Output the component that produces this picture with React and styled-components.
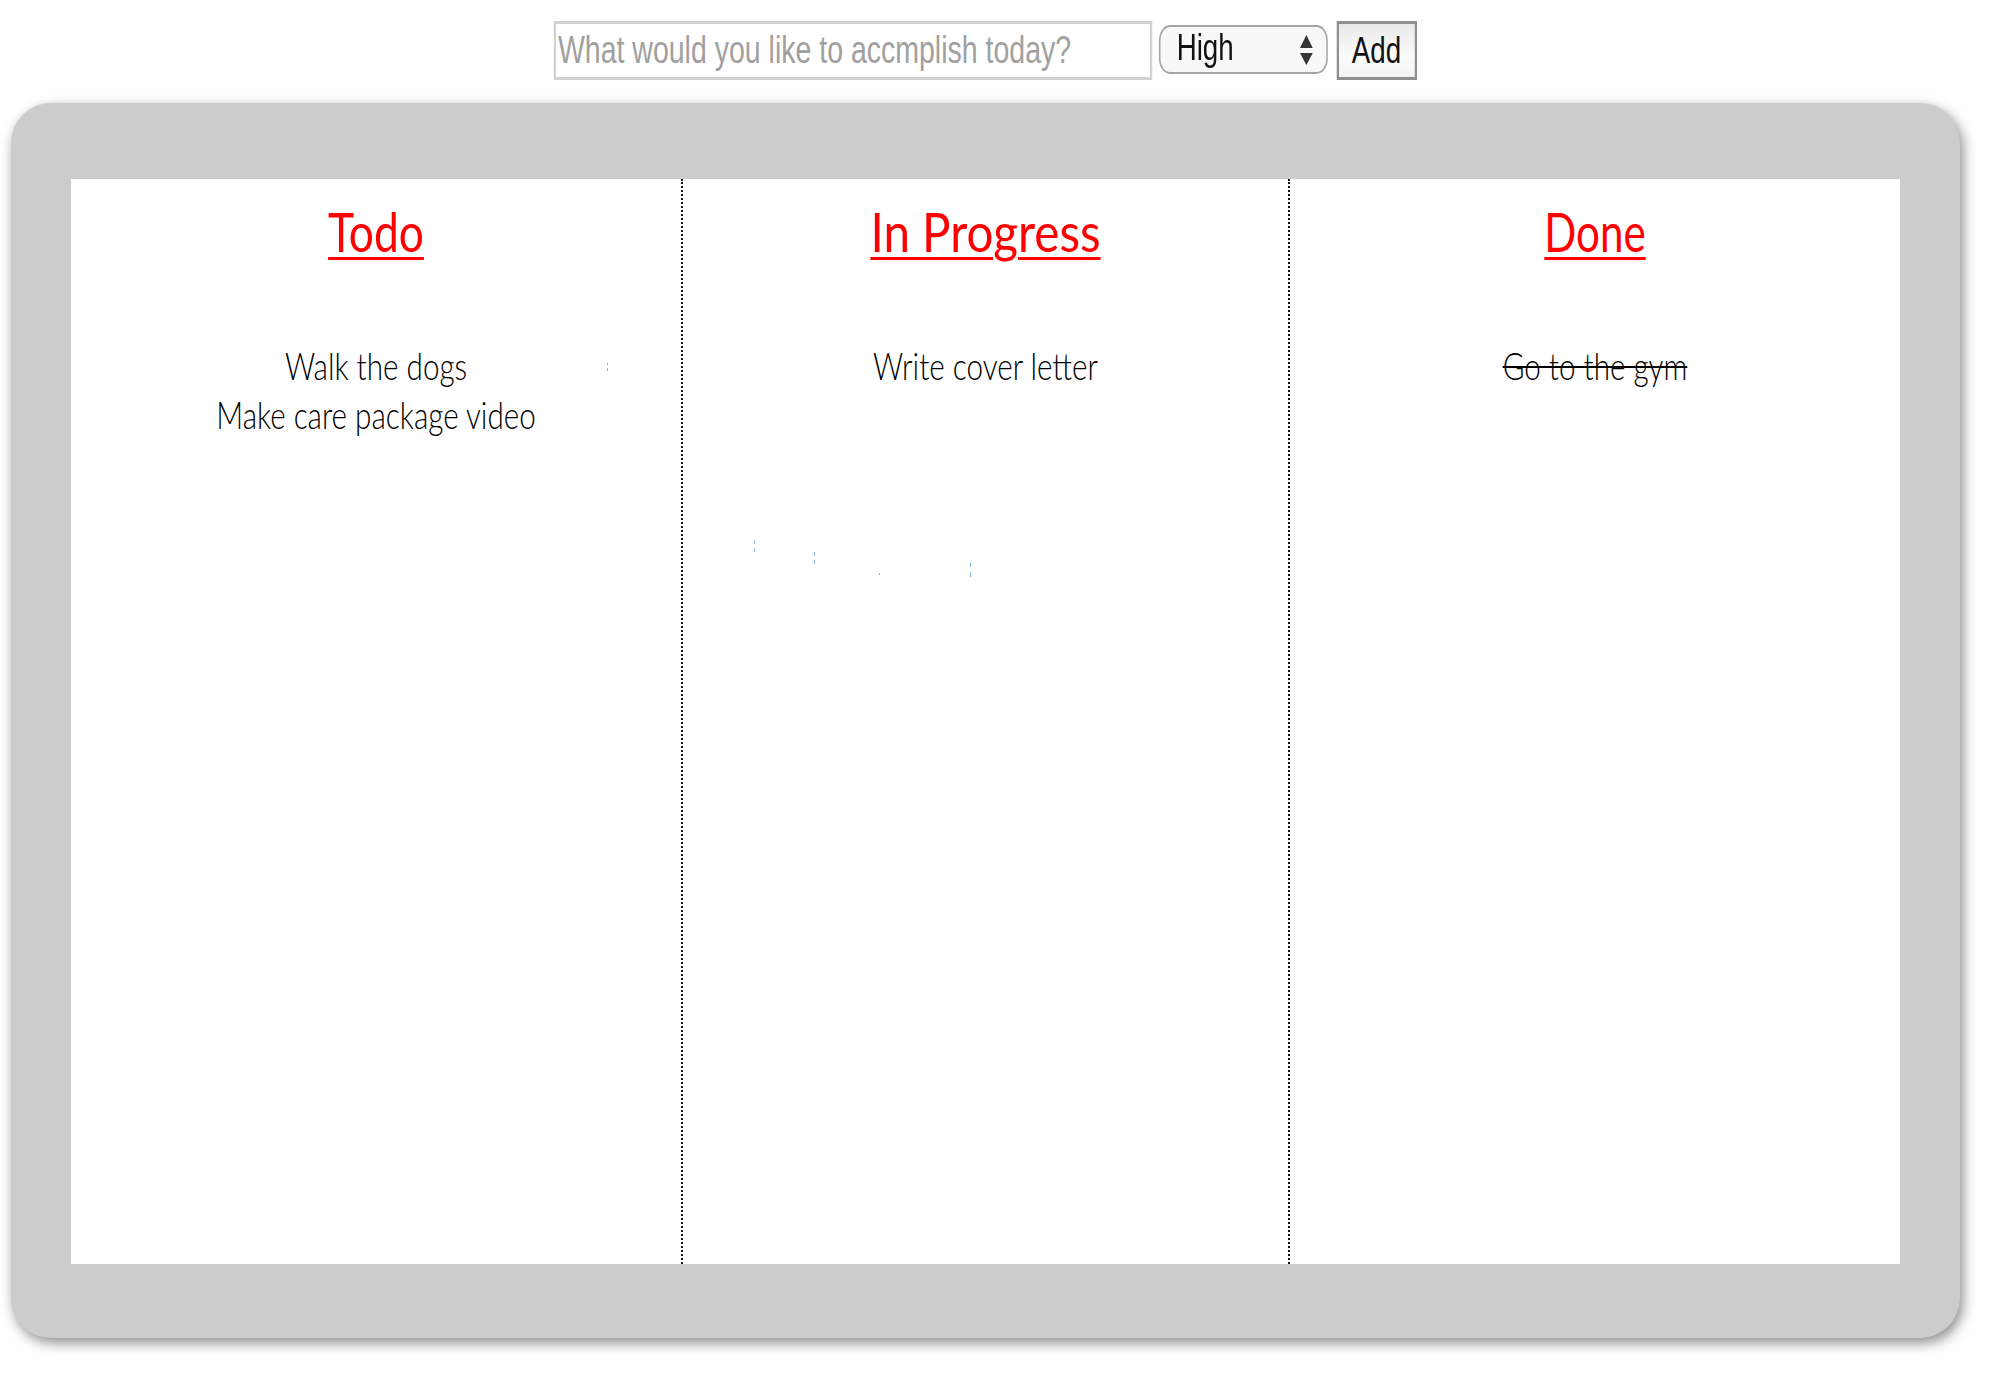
import React from 'react';
import styled, { createGlobalStyle } from 'styled-components';

const GlobalStyle = createGlobalStyle`
  html, body {
    margin: 0;
    padding: 0;
    background: #fff;
  }
`;

const controlFont = `"Liberation Sans", Arial, sans-serif`;
const handFont = `"Lato", "Open Sans", sans-serif`;

const Page = styled.div`
  width: 1989px;
  height: 1388px;
  padding-top: 21px;
  box-sizing: border-box;
  overflow: hidden;
`;

// the reference is squeezed sideways, so the whole form gets the same squeeze
const TodoForm = styled.form`
  display: flex;
  justify-content: center;
  align-items: center;
  width: 1970px;
  height: 59px;
  transform: scaleX(0.75);
`;

const TaskInput = styled.input`
  box-sizing: border-box;
  flex: none;
  width: 798px;
  height: 59px;
  padding: 0 3px;
  border: 3px solid #d2d2d2;
  border-radius: 0;
  outline: none;
  font-family: ${controlFont};
  font-size: 38px;

  &::placeholder {
    color: #a0a0a0;
    opacity: 1;
  }
`;

const SelectWrap = styled.div`
  position: relative;
  flex: none;
  width: 225px;
  height: 49px;
  margin: 0 12px 3px 9px;
`;

const PrioritySelect = styled.select`
  appearance: none;
  box-sizing: border-box;
  width: 100%;
  height: 100%;
  padding: 0 0 4px 22px;
  border: 2px solid #a4a4a4;
  border-radius: 15px;
  outline: none;
  background: #f8f8f8;
  color: #111;
  font-family: ${controlFont};
  font-size: 37px;
`;

const SelectArrows = styled.svg`
  position: absolute;
  top: 9px;
  right: 19px;
  width: 19px;
  height: 32px;
  pointer-events: none;
`;

const AddButton = styled.button`
  box-sizing: border-box;
  flex: none;
  width: 107px;
  height: 59px;
  padding: 0;
  border: 3px solid #8f8f8f;
  background: linear-gradient(#e9e9e9, #fbfbfb 60%, #f4f4f4);
  color: #111;
  font-family: ${controlFont};
  font-size: 37px;
`;

const Board = styled.div`
  box-sizing: border-box;
  width: 1949px;
  height: 1235px;
  margin: 23px 0 0 11px;
  padding: 76px 60px 74px;
  border-radius: 40px;
  background: #cccccc;
  box-shadow: 3px 5px 13px rgba(0, 0, 0, 0.45);
`;

const Columns = styled.div`
  display: grid;
  grid-template-columns: 612px 607px 610px;
  height: 100%;
  background: #fff;
`;

const Column = styled.section`
  position: relative;
  box-sizing: border-box;
  padding-top: 21px;
  text-align: center;
  border-right: ${({ $divider }) => ($divider ? '2px dotted #111' : 'none')};
`;

const Heading = styled.h2`
  margin: 0 0 77px;
  color: #ff0000;
  font-family: ${handFont};
  font-size: 54px;
  font-weight: 400;
  line-height: 64px;
  text-decoration: underline;
  text-decoration-thickness: 3px;
  text-underline-offset: 5px;
  transform: scaleX(${({ $squeeze }) => $squeeze});
`;

const TaskList = styled.ul`
  margin: 0;
  padding: 0;
  list-style: none;
`;

const Task = styled.li`
  color: #000;
  font-family: ${handFont};
  font-size: 38px;
  font-weight: 300;
  line-height: 49px;
  text-decoration: ${({ $done }) => ($done ? 'line-through' : 'none')};
  text-decoration-thickness: 2px;
  transform: scaleX(0.78);
`;

const Speck = styled.i`
  position: absolute;
  width: 1px;
  height: ${({ $h }) => $h}px;
  top: ${({ $top }) => $top}px;
  left: ${({ $left }) => $left}px;
  background: linear-gradient(#7fb0d8 30%, transparent 30%, transparent 65%, #7fb0d8 65%);
`;

const App = () => (
  <>
    <GlobalStyle />
    <Page>
      <TodoForm onSubmit={(e) => e.preventDefault()}>
        <TaskInput placeholder="What would you like to accmplish today?" />
        <SelectWrap>
          <PrioritySelect defaultValue="High">
            <option>High</option>
            <option>Medium</option>
            <option>Low</option>
          </PrioritySelect>
          <SelectArrows viewBox="0 0 19 32" preserveAspectRatio="none">
            <path d="M9.5 1 L18 14 H1 Z M1 19 H18 L9.5 31 Z" fill="#333" />
          </SelectArrows>
        </SelectWrap>
        <AddButton type="submit">Add</AddButton>
      </TodoForm>
      <Board>
        <Columns>
          <Column $divider>
            <Heading $squeeze={0.82}>Todo</Heading>
            <TaskList>
              <Task>Walk the dogs</Task>
              <Task>Make care package video</Task>
            </TaskList>
            <Speck $top={184} $left={536} $h={8} />
          </Column>
          <Column $divider>
            <Heading $squeeze={0.88}>In Progress</Heading>
            <TaskList>
              <Task>Write cover letter</Task>
            </TaskList>
            <Speck $top={361} $left={71} $h={12} />
            <Speck $top={373} $left={131} $h={12} />
            <Speck $top={394} $left={196} $h={2} />
            <Speck $top={384} $left={287} $h={14} />
          </Column>
          <Column>
            <Heading $squeeze={0.78}>Done</Heading>
            <TaskList>
              <Task $done>Go to the gym</Task>
            </TaskList>
          </Column>
        </Columns>
      </Board>
    </Page>
  </>
);

export default App;
